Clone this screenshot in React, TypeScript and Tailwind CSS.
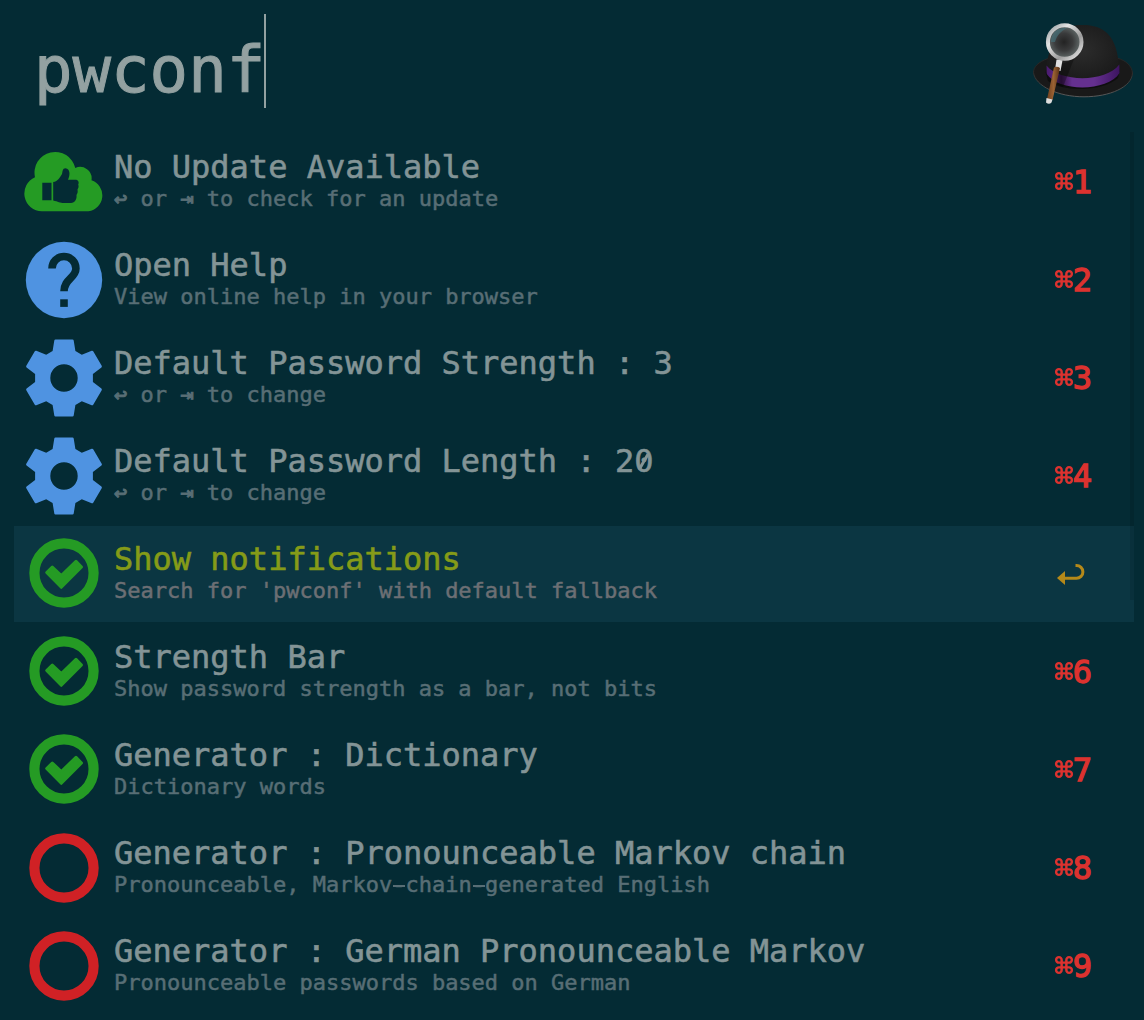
import React from 'react';

type IconKind = 'cloud' | 'help' | 'gear' | 'on' | 'off';

interface Row {
  icon: IconKind;
  title: string;
  subtitle: string;
  shortcut: string;
  selected?: boolean;
}

const rows: Row[] = [
  { icon: 'cloud', title: 'No Update Available', subtitle: '↩ or ⇥ to check for an update', shortcut: '1' },
  { icon: 'help', title: 'Open Help', subtitle: 'View online help in your browser', shortcut: '2' },
  { icon: 'gear', title: 'Default Password Strength : 3', subtitle: '↩ or ⇥ to change', shortcut: '3' },
  { icon: 'gear', title: 'Default Password Length : 20', subtitle: '↩ or ⇥ to change', shortcut: '4' },
  { icon: 'on', title: 'Show notifications', subtitle: "Search for 'pwconf' with default fallback", shortcut: '', selected: true },
  { icon: 'on', title: 'Strength Bar', subtitle: 'Show password strength as a bar, not bits', shortcut: '6' },
  { icon: 'on', title: 'Generator : Dictionary', subtitle: 'Dictionary words', shortcut: '7' },
  { icon: 'off', title: 'Generator : Pronounceable Markov chain', subtitle: 'Pronounceable, Markov-chain-generated English', shortcut: '8' },
  { icon: 'off', title: 'Generator : German Pronounceable Markov', subtitle: 'Pronounceable passwords based on German', shortcut: '9' },
];

function RowIcon({ kind }: { kind: IconKind }) {
  return (
    <svg viewBox="0 0 80 80" className="h-20 w-20 shrink-0">
      {kind === 'cloud' && (
        <>
          <path
            fill="#259b24"
            d="M17.800 69.300A17.800 17.800 0 0 1 11 35.200A20 20 0 0 1 51.300 26A11.600 11.600 0 0 1 67.500 38.300A16 16 0 0 1 64.500 69.300Z"
          />
          <path
            fill="#042b34"
            d="M18.300 40.800h9.200v17.400h-9.200zM29.200 40C34 39.500 36 35 38 32C38.800 29.500 38.300 26.200 41.500 26.200C46 27 46.500 32 44 37.700H51.500C54 37.700 55.500 40 54.200 42.500C55 44.500 54.500 46 53.500 47.500C54 50 53.500 51.500 52.500 53C53 57 51 61 47 61H40C36 61 34 59.500 29.200 58.500Z"
          />
        </>
      )}
      {kind === 'help' && (
        <>
          <circle cx="40" cy="40" r="38.200" fill="#4f93e1" />
          <path
            fill="none"
            stroke="#042b34"
            strokeWidth="7.600"
            d="M28 28.500A11.900 11.900 0 0 1 51.900 28.500C51.900 38 40 39 40 51.300"
          />
          <path fill="#042b34" d="M36.200 59.300h7.600v7.600h-7.600z" />
        </>
      )}
      {kind === 'gear' && (
        <path
          fill="#4f93e1"
          fillRule="evenodd"
          d="M31.500 1.500h17q1 0 1.200 1l1.700 10.500l6.400 3.700l9.900-3.900q1-.4 1.500.5l8.500 14.500q.5 1-.3 1.600l-8.500 6.600v8l8.500 6.600q.8.600.3 1.600l-8.500 14.500q-.5.900-1.500.5l-9.900-3.900l-6.400 3.700l-1.700 10.500q-.2 1-1.200 1h-17q-1 0-1.200-1l-1.700-10.500l-6.400-3.700l-9.900 3.900q-1 .4-1.500-.5l-8.500-14.500q-.5-1 .3-1.600l8.500-6.600v-8l-8.500-6.600q-.8-.6-.3-1.600l8.500-14.500q.5-.9 1.500-.5l9.900 3.900l6.400-3.700l1.700-10.500q.2-1 1.200-1zM40 26.300a13.700 13.700 0 1 0 0 27.400a13.700 13.700 0 1 0 0-27.400z"
        />
      )}
      {kind === 'on' && (
        <>
          <circle cx="40" cy="40" r="29.600" fill="none" stroke="#259b24" strokeWidth="10.200" />
          <path
            fill="#259b24"
            stroke="#259b24"
            strokeWidth="3"
            strokeLinejoin="round"
            d="M22.700 39.500L28.300 34L37.300 42.500L52 28.300L57.500 34L37.300 54.300Z"
          />
        </>
      )}
      {kind === 'off' && (
        <circle cx="40" cy="40" r="29.600" fill="none" stroke="#d02125" strokeWidth="10.200" />
      )}
    </svg>
  );
}

function HatLogo() {
  return (
    <svg viewBox="0 0 124 110" className="h-[110px] w-[124px] shrink-0">
      <defs>
        <radialGradient id="crown" cx="0.5" cy="0.45" r="0.6">
          <stop offset="0" stopColor="#2c2c2c" />
          <stop offset="1" stopColor="#191919" />
        </radialGradient>
        <radialGradient id="lens" cx="0.48" cy="0.5" r="0.55">
          <stop offset="0" stopColor="#232323" />
          <stop offset="0.5" stopColor="#3a3b3c" />
          <stop offset="1" stopColor="#66706f" />
        </radialGradient>
        <linearGradient id="band" x1="0" x2="1">
          <stop offset="0" stopColor="#4a1a70" />
          <stop offset="0.12" stopColor="#5a2880" />
          <stop offset="0.2" stopColor="#351448" />
          <stop offset="0.35" stopColor="#65308f" />
          <stop offset="0.65" stopColor="#65308f" />
          <stop offset="1" stopColor="#3c1460" />
        </linearGradient>
        <linearGradient id="rim" x1="0" y1="0" x2="1" y2="1">
          <stop offset="0" stopColor="#8f9699" />
          <stop offset="0.3" stopColor="#e4e4e4" />
          <stop offset="0.65" stopColor="#9c9c9c" />
          <stop offset="1" stopColor="#eeeeee" />
        </linearGradient>
        <linearGradient id="wood" x1="0" x2="1">
          <stop offset="0" stopColor="#6b3d1d" />
          <stop offset="0.5" stopColor="#9a6233" />
          <stop offset="1" stopColor="#593014" />
        </linearGradient>
        <linearGradient id="edge" x1="0" y1="0" x2="0" y2="1">
          <stop offset="0.3" stopColor="#262626" />
          <stop offset="1" stopColor="#5a5a5a" />
        </linearGradient>
      </defs>
      <path
        fill="#191919"
        stroke="url(#edge)"
        strokeWidth="1"
        d="M28 48.500C18 52 13.500 57 13.500 62.500C15 76 38 86.800 64 86.800C90 86.800 112 77 112.500 63C112 56 106 50.500 97 48Z"
      />
      <path fill="#0e0e0e" d="M25 60C30 78 93 78 100 59L98 68C83 82 42 82 28 71Z" />
      <path
        fill="url(#crown)"
        d="M26.500 60C28 34 39 15 60 15C72 14.500 81 17 87.500 23.500C95 31 98.500 44 99 58C86 75 40 75 26.500 60Z"
      />
      <path
        fill="url(#band)"
        d="M26.500 55.500C40 72.500 86 72.500 99.300 54.500L99.500 63C88 82 38 82 26.800 64Z"
      />
      <path fill="#000" opacity="0.3" d="M42 54L54 49L43 77L35 74Z" />
      <circle cx="44.700" cy="32" r="16" fill="url(#lens)" />
      <path fill="#45717b" opacity="0.65" d="M31 32C31 23 37 17 47 18C41 21 37 25 35 32Z" />
      <circle cx="44.700" cy="32" r="16.800" fill="none" stroke="url(#rim)" strokeWidth="4" />
      <path fill="#e0e0e0" d="M36.500 49.500L42.500 50.500L40.500 61L35 60Z" />
      <path fill="url(#wood)" d="M34 57.500Q37 56 40 58L32.500 90L27 89Z" />
      <path fill="#ddd" d="M26.500 88L32.500 89.500L31.500 92.500Q29 95 26 92.500Z" />
    </svg>
  );
}

function CommandGlyph() {
  return (
    <svg
      viewBox="0 0 19 19"
      className="mb-[2px] h-[18px] w-[18px] overflow-visible"
      fill="none"
      stroke="#dc322f"
      strokeWidth="2.600"
    >
      <path d="M7 7V4.200A2.900 2.900 0 1 0 4.100 7H14.900A2.900 2.900 0 1 0 12 4.200V14.800A2.900 2.900 0 1 0 14.900 12H4.100A2.900 2.900 0 1 0 7 14.800Z" />
    </svg>
  );
}

// Widens hyphens, thickens arrow symbols and slashes the zero, keeping the monospace cell width.
function StyledText({ text }: { text: string }) {
  return (
    <>
      {text.split(/([-↩⇥0])/).map((part, i) => {
        if (part === '-') {
          return (
            <span
              key={i}
              className="relative after:absolute after:left-[1px] after:top-[13px] after:h-[2px] after:w-[12px] after:bg-current after:content-['']"
            >
              -
            </span>
          );
        }
        if (part === '↩' || part === '⇥') {
          return (
            <span key={i} className="[-webkit-text-stroke:0.9px_currentColor]">
              {part}
            </span>
          );
        }
        if (part === '0') {
          return (
            <span
              key={i}
              className="relative inline-block after:absolute after:left-[8px] after:top-[11px] after:h-[18px] after:w-[3px] after:rotate-[30deg] after:bg-current after:content-['']"
            >
              0
            </span>
          );
        }
        return part;
      })}
    </>
  );
}

function ResultRow({ row }: { row: Row }) {
  return (
    <li className={`flex h-24 items-start pl-[10px] pr-[42px] ${row.selected ? 'bg-[#0b3642]' : ''}`}>
      <div className={row.icon === 'on' ? 'pt-[7px]' : 'pt-2'}>
        <RowIcon kind={row.icon} />
      </div>
      <div className="flex grow flex-col whitespace-pre pl-[10px] pt-[14px]">
        <span
          className={`text-[32px] leading-[38px] [-webkit-text-stroke:0.6px_currentColor] ${row.selected ? 'text-[#859b18]' : 'text-[#839496]'}`}
        >
          <StyledText text={row.title} />
        </span>
        <span
          className={`text-[22px] leading-[26px] [-webkit-text-stroke:0.5px_currentColor] ${row.selected ? 'text-[#6c6f74]' : 'text-[#586e75]'}`}
        >
          <StyledText text={row.subtitle} />
        </span>
      </div>
      {row.selected ? (
        <svg viewBox="0 0 28 22" className="mr-[7px] mt-[37px] h-[22px] w-7">
          <path d="M8 15.300H19.500A6 6 0 0 0 19.500 2.500H18.500" fill="none" stroke="#b58919" strokeWidth="3" />
          <path d="M0 15L8 8V22Z" fill="#b58919" />
        </svg>
      ) : (
        <div className="mt-[29px] flex h-[38px] items-center text-[32px] leading-[38px] text-[#dc322f] [-webkit-text-stroke:1.3px_currentColor]">
          <CommandGlyph />
          <span>{row.shortcut}</span>
        </div>
      )}
    </li>
  );
}

export default function App() {
  return (
    <main className="relative flex h-[1020px] w-[1144px] flex-col overflow-hidden bg-[#042b34] font-['DejaVu_Sans_Mono',monospace]">
      <header className="flex h-[134px] shrink-0 items-start justify-between pl-[34px] pt-[10px]">
        <div className="flex items-start pt-1">
          <span className="h-[94px] text-[64px] leading-[112px] text-[#93a1a1] [-webkit-text-stroke:1px_currentColor]">
            pwconf
          </span>
          <span className="-ml-[1px] h-[94px] w-[2px] bg-[#93a1a1]" />
        </div>
        <HatLogo />
      </header>
      <ul className="ml-[14px] flex w-[1120px] flex-col gap-[2px]">
        {rows.map((row) => (
          <ResultRow key={row.title} row={row} />
        ))}
      </ul>
      <div className="absolute left-[1130px] top-[132px] h-[468px] w-1 bg-black/10" />
    </main>
  );
}
